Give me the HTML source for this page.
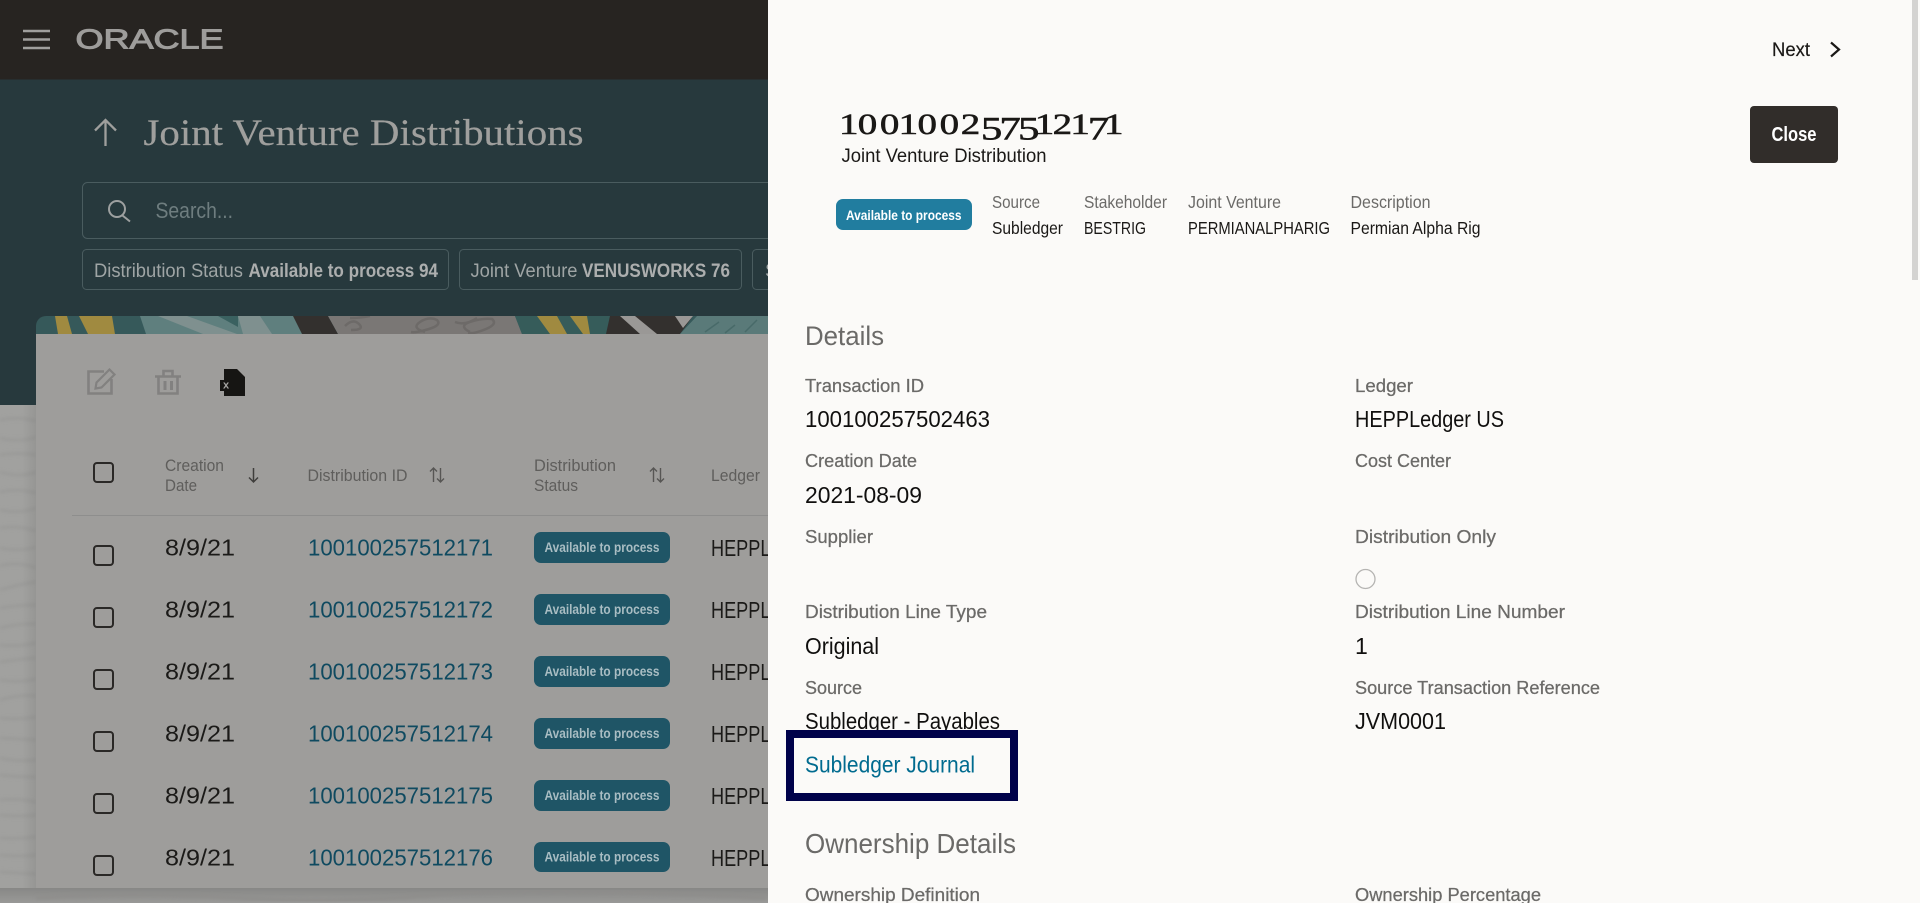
<!DOCTYPE html>
<html lang="en"><head><meta charset="utf-8"><title>Joint Venture Distributions</title>
<style>
html,body{margin:0;padding:0;width:1920px;height:903px;overflow:hidden;background:#a0a09e}
svg{display:block;position:absolute;left:0;top:0}
text{font-family:"Liberation Sans",sans-serif;white-space:pre}
.serif{font-family:"Liberation Serif",serif}
.hd{font-size:16.500px;fill:#5f5e5c}
.dt{font-size:23px;fill:#1b1a18}
.id{font-size:23px;fill:#0f4a60}
.bt{font-size:14px;font-weight:bold;fill:#a9bdc3}
.ml{font-size:17.500px;fill:#6b6a68}
.mv{font-size:17.500px;fill:#1a1816}
.lb{font-size:18.500px;fill:#6b6a68;stroke:#6b6a68;stroke-width:.25px}
.vl{font-size:23px;fill:#100f0e}
.cb{fill:none;stroke:#2a2826;stroke-width:2}
.bd{fill:#1f5566}
</style></head><body>
<svg width="1920" height="903" viewBox="0 0 1920 903" xmlns="http://www.w3.org/2000/svg">
<defs>
<clipPath id="ban"><path d="M36 334V326a10 10 0 0 1 10-10H768V334Z"/></clipPath>
<linearGradient id="sh" x1="0" x2="1" y1="0" y2="0"><stop offset="0" stop-color="#000" stop-opacity="0"/><stop offset="1" stop-color="#000" stop-opacity=".07"/></linearGradient>
<linearGradient id="shb" x1="0" x2="0" y1="0" y2="1"><stop offset="0" stop-color="#000" stop-opacity=".16"/><stop offset="1" stop-color="#000" stop-opacity=".05"/></linearGradient>
<filter id="bl" x="-10%" y="-10%" width="120%" height="120%"><feGaussianBlur stdDeviation="1.600"/></filter>
</defs>

<!-- page bg -->
<rect width="1920" height="903" fill="#a1a19f"/>
<g fill="none" stroke="#9a9a98" stroke-width="3" filter="url(#bl)">
<path d="M0 420q18-4 36 1M0 438q20 5 36-1M0 455q18-3 36 0M0 472q20 6 36 0M0 492q18-4 36 1M0 510q20 4 36-2M0 528q18-3 36 3M0 548q20 4 36-1M0 566q18-5 36 2M0 590q20-6 36-8M0 608q18-3 36-3M0 628q20-5 36-4M0 645q18 2 36-2M0 662q20-3 36-4M0 680q18 3 36-1M0 700q20-6 36-4M0 718q18 2 36-1M0 738q20 1 36 2M0 758q18 4 36 2M0 775q20 2 36 2M0 800q18-2 36 2M0 815q20 2 36 0M0 838q18 1 36-1M0 855q20 2 36 0M0 872q18 1 36 2"/>
</g>
<rect x="22" y="405" width="14" height="483" fill="url(#sh)"/>
<rect x="0" y="888" width="770" height="15" fill="url(#shb)"/>
<path d="M36 898q100-6 200 0t200-3 330 3" fill="none" stroke="#8e8d8b" stroke-width="3" filter="url(#bl)"/>

<!-- header / hero -->
<rect width="770" height="405" y="0" fill="#27393d"/>
<rect width="770" height="79.500" fill="#272421"/>
<path d="M23 31H50M23 39.500H50M23 48H50" stroke="#a09f9d" stroke-width="2.600"/>
<text x="75.500" y="48.500" font-size="28" fill="#9e9d9b" stroke="#9e9d9b" stroke-width="1" textLength="148" lengthAdjust="spacingAndGlyphs">ORACLE</text>

<path d="M105.500 146V120M95 130.500L105.500 120L116 130.500" fill="none" stroke="#9f9f9d" stroke-width="2.300"/>
<text class="serif" x="143.500" y="145" font-size="37" fill="#9f9f9d" stroke="#9f9f9d" stroke-width=".2" textLength="440" lengthAdjust="spacingAndGlyphs">Joint Venture Distributions</text>

<rect x="82.500" y="182.500" width="760" height="56" rx="5" fill="none" stroke="#4a5c5f"/>
<circle cx="117" cy="209" r="8" fill="none" stroke="#9da0a0" stroke-width="2"/>
<path d="M122.500 215.500L130 221.500" stroke="#9da0a0" stroke-width="2"/>
<text x="155.500" y="218" font-size="22" fill="#6e7d7f" textLength="77.500" lengthAdjust="spacingAndGlyphs">Search...</text>

<rect x="82.500" y="249.500" width="366" height="40" rx="4" fill="none" stroke="#4a5c5f"/>
<text x="94" y="277" font-size="19.500" fill="#9fa5a5" textLength="149" lengthAdjust="spacingAndGlyphs">Distribution Status</text>
<text x="248.500" y="277" font-size="19.500" font-weight="bold" fill="#acaeae" textLength="189.500" lengthAdjust="spacingAndGlyphs">Available to process 94</text>
<rect x="459.500" y="249.500" width="282" height="40" rx="4" fill="none" stroke="#4a5c5f"/>
<text x="470.500" y="277" font-size="19.500" fill="#9fa5a5" textLength="107" lengthAdjust="spacingAndGlyphs">Joint Venture</text>
<text x="582" y="277" font-size="19.500" font-weight="bold" fill="#acaeae" textLength="148" lengthAdjust="spacingAndGlyphs">VENUSWORKS 76</text>
<rect x="752.500" y="249.500" width="100" height="40" rx="4" fill="none" stroke="#4a5c5f"/>
<text x="765" y="277" font-size="19.500" fill="#9fa5a5">S</text>

<!-- card banner -->
<g clip-path="url(#ban)">
<rect x="36" y="316" width="734" height="18" fill="#36595a"/>
<path d="M55 316H67L72 334H58Z" fill="#a08a40"/>
<path d="M79 316H112L115 334H88Z" fill="#a08a40"/>
<path d="M114 316H310L318 334H115Z" fill="#36595a"/>
<path d="M140 316H300L306 334H146Z" fill="#5f7f7e"/>
<path d="M158 316H187L237 334H203Z" fill="#7f908f"/>
<path d="M218 316H238V327Z" fill="#3a6160"/>
<path d="M238 316H260L272 334H243Z" fill="#7f908f"/>
<path d="M293 316H328L338 334H302Z" fill="#33302e"/>
<path d="M328 316H515L522 334H338Z" fill="#7a7775"/>
<g fill="none" stroke="#6d6a68" stroke-width="2.500">
<path d="M345 326q8-8 14-2t-8 6M425 332q-14-4-5-10t17-2q5 5-8 9t-18 3M455 322q10 4 22-4M470 332q-12-6 0-10t22-3q6 5-6 10t-18 4M350 318q10 0 20-2"/>
</g>
<path d="M515 316H610L606 334H522Z" fill="#365c5a"/>
<path d="M537 316H557L567 334H550Z" fill="#a08a40"/>
<path d="M570 316H587L590 334H583Z" fill="#a08a40"/>
<path d="M610 316H693L680 334H606Z" fill="#33302e"/>
<path d="M620 316H635L657 334H640Z" fill="#9a9896"/>
<path d="M675 316H693L683 328Z" fill="#9a9896"/>
<path d="M697 316H770V334H680Z" fill="#5a7a79"/>
<path d="M705 332l14-10M725 333l10-8M745 332l12-12" stroke="#486a69" stroke-width="1.500" fill="none"/>
</g>

<!-- card body -->
<rect x="36" y="334" width="734" height="554" fill="#9e9d9b"/>

<!-- toolbar -->
<g fill="none" stroke="#828180">
<path d="M104 371.500H88.500V393.500H111.500V379" stroke-width="2.600"/>
<path d="M95.500 388.500l1-6 13-13 5 5-13 13z" stroke-width="2.200"/>
<path d="M155 376.500H181M163.500 376V371H172.500V376M158.500 377V393.500H177.500V377" stroke-width="2.600"/>
<path d="M165 381V390M171.500 381V390" stroke-width="3"/>
</g>
<path d="M224 369H237L245 377V396H224Z" fill="#161513"/>
<rect x="220" y="380" width="7" height="11" fill="#161513"/>
<text x="223" y="388.500" font-size="11" font-weight="bold" fill="#a5a4a2">x</text>

<!-- table head -->
<rect class="cb" x="94" y="463" width="19" height="19" rx="3"/>
<text class="hd" x="165" y="471" textLength="59" lengthAdjust="spacingAndGlyphs">Creation</text>
<text class="hd" x="165" y="491" textLength="32" lengthAdjust="spacingAndGlyphs">Date</text>
<path d="M253.500 468V482M249 477.500L253.500 482L258 477.500" fill="none" stroke="#3f3e3c" stroke-width="1.500"/>
<text class="hd" x="307.500" y="481" textLength="100" lengthAdjust="spacingAndGlyphs">Distribution ID</text>
<path d="M433.500 482V468M430 471.500L433.500 468L437 471.500M440.500 468V482M437 478.500L440.500 482L444 478.500" fill="none" stroke="#575654" stroke-width="1.400"/>
<text class="hd" x="534" y="471" textLength="82" lengthAdjust="spacingAndGlyphs">Distribution</text>
<text class="hd" x="534" y="491" textLength="44" lengthAdjust="spacingAndGlyphs">Status</text>
<path d="M653.500 482V468M650 471.500L653.500 468L657 471.500M660.500 468V482M657 478.500L660.500 482L664 478.500" fill="none" stroke="#575654" stroke-width="1.400"/>
<text class="hd" x="711" y="481" textLength="49" lengthAdjust="spacingAndGlyphs">Ledger</text>
<rect x="72" y="515" width="698" height="1" fill="#8e8e8d"/>

<!-- rows -->
<g>
<rect class="cb" x="94" y="546" width="19" height="19" rx="3"/><text class="dt" x="165" y="555.500" textLength="70" lengthAdjust="spacingAndGlyphs">8/9/21</text><text class="id" x="308" y="555.500" textLength="185" lengthAdjust="spacingAndGlyphs">100100257512171</text><rect class="bd" x="534" y="532" width="136" height="31" rx="7"/><text class="bt" x="544.500" y="552" textLength="115" lengthAdjust="spacingAndGlyphs">Available to process</text><text class="dt" x="711" y="556" textLength="136" lengthAdjust="spacingAndGlyphs">HEPPLedger US</text>
<rect class="cb" x="94" y="608" width="19" height="19" rx="3"/><text class="dt" x="165" y="617.500" textLength="70" lengthAdjust="spacingAndGlyphs">8/9/21</text><text class="id" x="308" y="617.500" textLength="185" lengthAdjust="spacingAndGlyphs">100100257512172</text><rect class="bd" x="534" y="594" width="136" height="31" rx="7"/><text class="bt" x="544.500" y="614" textLength="115" lengthAdjust="spacingAndGlyphs">Available to process</text><text class="dt" x="711" y="618" textLength="136" lengthAdjust="spacingAndGlyphs">HEPPLedger US</text>
<rect class="cb" x="94" y="670" width="19" height="19" rx="3"/><text class="dt" x="165" y="679.500" textLength="70" lengthAdjust="spacingAndGlyphs">8/9/21</text><text class="id" x="308" y="679.500" textLength="185" lengthAdjust="spacingAndGlyphs">100100257512173</text><rect class="bd" x="534" y="656" width="136" height="31" rx="7"/><text class="bt" x="544.500" y="676" textLength="115" lengthAdjust="spacingAndGlyphs">Available to process</text><text class="dt" x="711" y="680" textLength="136" lengthAdjust="spacingAndGlyphs">HEPPLedger US</text>
<rect class="cb" x="94" y="732" width="19" height="19" rx="3"/><text class="dt" x="165" y="741.500" textLength="70" lengthAdjust="spacingAndGlyphs">8/9/21</text><text class="id" x="308" y="741.500" textLength="185" lengthAdjust="spacingAndGlyphs">100100257512174</text><rect class="bd" x="534" y="718" width="136" height="31" rx="7"/><text class="bt" x="544.500" y="738" textLength="115" lengthAdjust="spacingAndGlyphs">Available to process</text><text class="dt" x="711" y="742" textLength="136" lengthAdjust="spacingAndGlyphs">HEPPLedger US</text>
<rect class="cb" x="94" y="794" width="19" height="19" rx="3"/><text class="dt" x="165" y="803.500" textLength="70" lengthAdjust="spacingAndGlyphs">8/9/21</text><text class="id" x="308" y="803.500" textLength="185" lengthAdjust="spacingAndGlyphs">100100257512175</text><rect class="bd" x="534" y="780" width="136" height="31" rx="7"/><text class="bt" x="544.500" y="800" textLength="115" lengthAdjust="spacingAndGlyphs">Available to process</text><text class="dt" x="711" y="804" textLength="136" lengthAdjust="spacingAndGlyphs">HEPPLedger US</text>
<rect class="cb" x="94" y="856" width="19" height="19" rx="3"/><text class="dt" x="165" y="865.500" textLength="70" lengthAdjust="spacingAndGlyphs">8/9/21</text><text class="id" x="308" y="865.500" textLength="185" lengthAdjust="spacingAndGlyphs">100100257512176</text><rect class="bd" x="534" y="842" width="136" height="30" rx="7"/><text class="bt" x="544.500" y="861.500" textLength="115" lengthAdjust="spacingAndGlyphs">Available to process</text><text class="dt" x="711" y="866" textLength="136" lengthAdjust="spacingAndGlyphs">HEPPLedger US</text>
</g>

<!-- drawer panel -->
<rect x="768" y="0" width="1152" height="903" fill="#fbfaf8"/>
<rect x="1912" y="0" width="6" height="280" fill="#d4d3d1"/>

<text x="1772" y="56" font-size="19.500" fill="#1a1816" stroke="#1a1816" stroke-width=".2" textLength="38" lengthAdjust="spacingAndGlyphs">Next</text>
<path d="M1831 42.500L1839 49.500L1831 56.500" fill="none" stroke="#1a1816" stroke-width="2.200"/>

<text class="serif" transform="scale(1.3,1)" fill="#1a1816" stroke="#1a1816" stroke-width=".55" font-size="30"><tspan x="645.4" y="134">1</tspan><tspan x="659.8" y="134">0</tspan><tspan x="676.8" y="134">0</tspan><tspan x="691.3" y="134">1</tspan><tspan x="705.8" y="134">0</tspan><tspan x="722.8" y="134">0</tspan><tspan x="739" y="134">2</tspan><tspan x="754.5" y="139.5" font-size="33">5</tspan><tspan x="768.8" y="139.5" font-size="33">7</tspan><tspan x="783.1" y="139.5" font-size="33">5</tspan><tspan x="796" y="134">1</tspan><tspan x="809.7" y="134">2</tspan><tspan x="823.4" y="134">1</tspan><tspan x="836.7" y="139.5" font-size="33">7</tspan><tspan x="849.2" y="134">1</tspan></text>
<text x="841.500" y="162" font-size="19.500" fill="#1a1816" textLength="205" lengthAdjust="spacingAndGlyphs">Joint Venture Distribution</text>

<rect x="1750" y="106" width="88" height="57" rx="4" fill="#312d2a"/>
<text x="1771.500" y="141" font-size="20.500" font-weight="bold" fill="#fff" textLength="45" lengthAdjust="spacingAndGlyphs">Close</text>

<rect x="836" y="199" width="136" height="31" rx="7" fill="#217d9f"/>
<text x="846" y="220" font-size="14" font-weight="bold" fill="#fff" textLength="115.500" lengthAdjust="spacingAndGlyphs">Available to process</text>
<text class="ml" x="992" y="208" textLength="48" lengthAdjust="spacingAndGlyphs">Source</text>
<text class="mv" x="992" y="234" textLength="71" lengthAdjust="spacingAndGlyphs">Subledger</text>
<text class="ml" x="1084" y="208" textLength="83" lengthAdjust="spacingAndGlyphs">Stakeholder</text>
<text class="mv" x="1084" y="234" textLength="62" lengthAdjust="spacingAndGlyphs">BESTRIG</text>
<text class="ml" x="1188" y="208" textLength="93" lengthAdjust="spacingAndGlyphs">Joint Venture</text>
<text class="mv" x="1188" y="234" textLength="142" lengthAdjust="spacingAndGlyphs">PERMIANALPHARIG</text>
<text class="ml" x="1350.500" y="208" textLength="80" lengthAdjust="spacingAndGlyphs">Description</text>
<text class="mv" x="1350.500" y="234" textLength="130" lengthAdjust="spacingAndGlyphs">Permian Alpha Rig</text>

<text x="805" y="345" font-size="27" fill="#6b6a68" textLength="79" lengthAdjust="spacingAndGlyphs">Details</text>

<text class="lb" x="805" y="392" textLength="119" lengthAdjust="spacingAndGlyphs">Transaction ID</text>
<text class="vl" x="805" y="427" textLength="185" lengthAdjust="spacingAndGlyphs">100100257502463</text>
<text class="lb" x="1355" y="392" textLength="58" lengthAdjust="spacingAndGlyphs">Ledger</text>
<text class="vl" x="1355" y="427" textLength="149" lengthAdjust="spacingAndGlyphs">HEPPLedger US</text>
<text class="lb" x="805" y="467" textLength="112" lengthAdjust="spacingAndGlyphs">Creation Date</text>
<text class="vl" x="805" y="503" textLength="117" lengthAdjust="spacingAndGlyphs">2021-08-09</text>
<text class="lb" x="1355" y="467" textLength="96" lengthAdjust="spacingAndGlyphs">Cost Center</text>
<text class="lb" x="805" y="543" textLength="68" lengthAdjust="spacingAndGlyphs">Supplier</text>
<text class="lb" x="1355" y="543" textLength="141" lengthAdjust="spacingAndGlyphs">Distribution Only</text>
<circle cx="1365.500" cy="579" r="9.500" fill="none" stroke="#b5b4b2" stroke-width="1.300"/>
<text class="lb" x="805" y="618" textLength="182" lengthAdjust="spacingAndGlyphs">Distribution Line Type</text>
<text class="vl" x="805" y="654" textLength="74" lengthAdjust="spacingAndGlyphs">Original</text>
<text class="lb" x="1355" y="618" textLength="210" lengthAdjust="spacingAndGlyphs">Distribution Line Number</text>
<text class="vl" x="1355" y="654">1</text>
<text class="lb" x="805" y="694" textLength="57" lengthAdjust="spacingAndGlyphs">Source</text>
<text class="vl" x="805" y="729" textLength="195" lengthAdjust="spacingAndGlyphs">Subledger - Payables</text>
<text class="lb" x="1355" y="694" textLength="245" lengthAdjust="spacingAndGlyphs">Source Transaction Reference</text>
<text class="vl" x="1355" y="729" textLength="91" lengthAdjust="spacingAndGlyphs">JVM0001</text>

<rect x="790" y="734" width="224" height="63" fill="#fbfaf8" stroke="#00024a" stroke-width="8"/>
<text x="805" y="772.500" font-size="23" fill="#006b8f" textLength="170" lengthAdjust="spacingAndGlyphs">Subledger Journal</text>

<text x="805" y="853" font-size="28" fill="#6b6a68" textLength="211" lengthAdjust="spacingAndGlyphs">Ownership Details</text>
<text class="lb" x="805" y="901" textLength="175" lengthAdjust="spacingAndGlyphs">Ownership Definition</text>
<text class="lb" x="1355" y="901" textLength="186" lengthAdjust="spacingAndGlyphs">Ownership Percentage</text>
</svg>
</body></html>
